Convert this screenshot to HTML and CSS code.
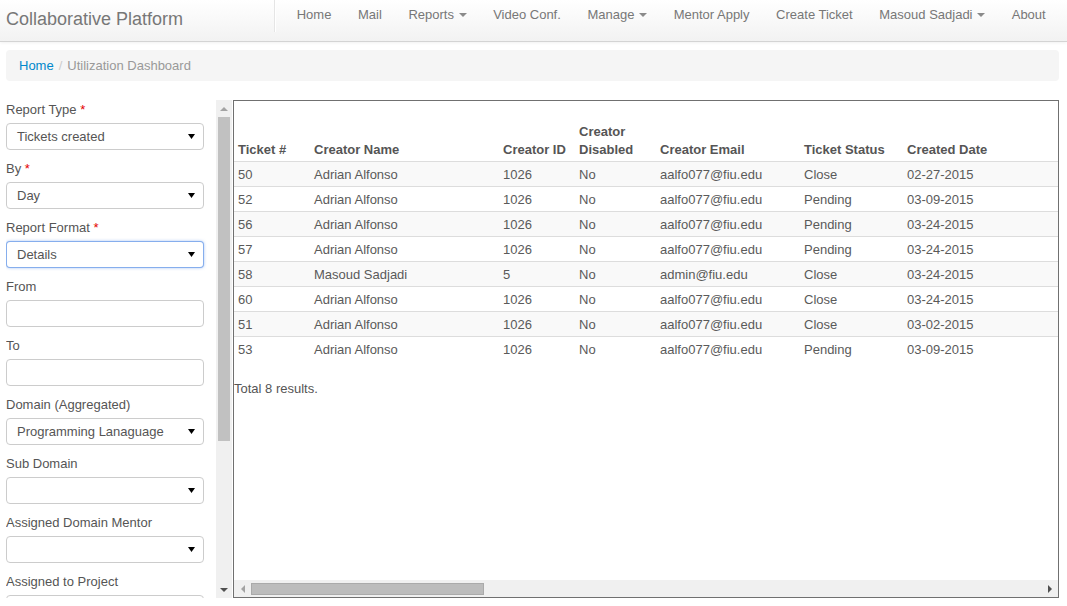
FILE: index.html
```html
<!DOCTYPE html>
<html>
<head>
<meta charset="utf-8">
<link rel="stylesheet" href="styles.css">
</head>
<body>
<header class="navbar">
  <div class="brand">Collaborative Platform</div>
  <div class="divider"></div>
  <ul class="nav">
    <li><a>Home</a></li>
    <li><a>Mail</a></li>
    <li><a>Reports <b class="caret"></b></a></li>
    <li><a>Video Conf.</a></li>
    <li><a>Manage <b class="caret"></b></a></li>
    <li><a>Mentor Apply</a></li>
    <li><a>Create Ticket</a></li>
    <li><a>Masoud Sadjadi <b class="caret"></b></a></li>
    <li><a>About</a></li>
  </ul>
</header>

<nav class="breadcrumb">
  <a class="crumb-link">Home</a><span class="sep">/</span><span class="crumb-active">Utilization Dashboard</span>
</nav>

<main class="content">
  <aside class="sidebar">
    <div class="form">
      <div class="field">
        <label>Report Type <span class="req">*</span></label>
        <div class="select"><span>Tickets created</span><svg class="arrow" width="7" height="5" viewBox="0 0 7 5"><polygon points="0,0 7,0 3.5,5" fill="#000"/></svg></div>
      </div>
      <div class="field">
        <label>By <span class="req">*</span></label>
        <div class="select"><span>Day</span><svg class="arrow" width="7" height="5" viewBox="0 0 7 5"><polygon points="0,0 7,0 3.5,5" fill="#000"/></svg></div>
      </div>
      <div class="field">
        <label>Report Format <span class="req">*</span></label>
        <div class="select focus"><span>Details</span><svg class="arrow" width="7" height="5" viewBox="0 0 7 5"><polygon points="0,0 7,0 3.5,5" fill="#000"/></svg></div>
      </div>
      <div class="field">
        <label>From</label>
        <div class="input"></div>
      </div>
      <div class="field">
        <label>To</label>
        <div class="input"></div>
      </div>
      <div class="field">
        <label>Domain (Aggregated)</label>
        <div class="select"><span>Programming Lanaguage</span><svg class="arrow" width="7" height="5" viewBox="0 0 7 5"><polygon points="0,0 7,0 3.5,5" fill="#000"/></svg></div>
      </div>
      <div class="field">
        <label>Sub Domain</label>
        <div class="select"><span></span><svg class="arrow" width="7" height="5" viewBox="0 0 7 5"><polygon points="0,0 7,0 3.5,5" fill="#000"/></svg></div>
      </div>
      <div class="field">
        <label>Assigned Domain Mentor</label>
        <div class="select"><span></span><svg class="arrow" width="7" height="5" viewBox="0 0 7 5"><polygon points="0,0 7,0 3.5,5" fill="#000"/></svg></div>
      </div>
      <div class="field">
        <label>Assigned to Project</label>
        <div class="select"><span></span><svg class="arrow" width="7" height="5" viewBox="0 0 7 5"><polygon points="0,0 7,0 3.5,5" fill="#000"/></svg></div>
      </div>
    </div>
    <div class="vscroll">
      <div class="sbtn"><i class="tri-up"></i></div>
      <div class="vtrack"><div class="vthumb"></div></div>
      <div class="sbtn"><i class="tri-down"></i></div>
    </div>
  </aside>

  <section class="panel">
    <div class="panel-body">
      <table class="grid">
        <colgroup>
          <col class="c1"><col class="c2"><col class="c3"><col class="c4"><col class="c5"><col class="c6"><col class="c7">
        </colgroup>
        <thead>
          <tr>
            <th>Ticket #</th><th>Creator Name</th><th>Creator ID</th><th>Creator<br>Disabled</th><th>Creator Email</th><th>Ticket Status</th><th>Created Date</th>
          </tr>
        </thead>
        <tbody>
          <tr class="odd"><td>50</td><td>Adrian Alfonso</td><td>1026</td><td>No</td><td>aalfo077@fiu.edu</td><td>Close</td><td>02-27-2015</td></tr>
          <tr><td>52</td><td>Adrian Alfonso</td><td>1026</td><td>No</td><td>aalfo077@fiu.edu</td><td>Pending</td><td>03-09-2015</td></tr>
          <tr class="odd"><td>56</td><td>Adrian Alfonso</td><td>1026</td><td>No</td><td>aalfo077@fiu.edu</td><td>Pending</td><td>03-24-2015</td></tr>
          <tr><td>57</td><td>Adrian Alfonso</td><td>1026</td><td>No</td><td>aalfo077@fiu.edu</td><td>Pending</td><td>03-24-2015</td></tr>
          <tr class="odd"><td>58</td><td>Masoud Sadjadi</td><td>5</td><td>No</td><td>admin@fiu.edu</td><td>Close</td><td>03-24-2015</td></tr>
          <tr><td>60</td><td>Adrian Alfonso</td><td>1026</td><td>No</td><td>aalfo077@fiu.edu</td><td>Close</td><td>03-24-2015</td></tr>
          <tr class="odd"><td>51</td><td>Adrian Alfonso</td><td>1026</td><td>No</td><td>aalfo077@fiu.edu</td><td>Close</td><td>03-02-2015</td></tr>
          <tr><td>53</td><td>Adrian Alfonso</td><td>1026</td><td>No</td><td>aalfo077@fiu.edu</td><td>Pending</td><td>03-09-2015</td></tr>
        </tbody>
      </table>
      <div class="summary">Total 8 results.</div>
    </div>
    <div class="hscroll">
      <div class="sbtn"><i class="tri-left"></i></div>
      <div class="htrack"><div class="hthumb"></div></div>
      <div class="sbtn"><i class="tri-right"></i></div>
    </div>
  </section>
</main>
</body>
</html>
```

FILE: styles.css
```css
html, body {
  margin: 0;
  padding: 0;
  background: #fff;
}
body {
  font-family: "Liberation Sans", Arial, sans-serif;
  font-size: 13px;
  color: #555;
  width: 1067px;
  height: 606px;
  overflow: hidden;
}

/* navbar */
.navbar {
  display: flex;
  height: 41px;
  background: linear-gradient(#ffffff, #f2f2f2);
  border-bottom: 1px solid #d4d4d4;
  box-shadow: 0 1px 3px rgba(0,0,0,0.06);
}
.brand {
  width: 268px;
  padding: 9px 0 0 6px;
  font-size: 18px;
  line-height: 20px;
  color: #777;
}
.divider {
  width: 1px;
  height: 32px;
  background: #e5e5e5;
  border-right: 1px solid #fff;
}
.nav {
  display: flex;
  list-style: none;
  margin: 0 8px 0 auto;
  padding: 0;
}
.nav a {
  display: block;
  padding: 5px 13.3px 3px;
  line-height: 20px;
  color: #777;
}
.caret {
  display: inline-block;
  width: 0;
  height: 0;
  margin-left: 1px;
  vertical-align: middle;
  border-top: 4px solid #8a8a8a;
  border-left: 4px solid transparent;
  border-right: 4px solid transparent;
  position: relative;
  top: -1px;
}

/* breadcrumb */
.breadcrumb {
  margin: 8px 8px 0 6px;
  height: 31px;
  box-sizing: border-box;
  line-height: 30px;
  padding: 1px 13px 0;
  background: #f5f5f5;
  border-radius: 4px;
}
.crumb-link { color: #0088cc; }
.sep { color: #ccc; padding: 0 5px; }
.crumb-active { color: #999; }

/* content */
.content {
  display: flex;
  margin-top: 19px;
  padding: 0 8px 0 6px;
  height: 498px;
}
.sidebar {
  display: flex;
  width: 227px;
  flex: 0 0 227px;
}
.form {
  width: 210px;
  overflow: hidden;
}
.field { margin-bottom: 9px; }
.field label {
  display: block;
  line-height: 18px;
  padding-top: 1px;
  margin-bottom: 4px;
  color: #555;
}
.req { color: #e40000; }
.select, .input {
  box-sizing: border-box;
  width: 198px;
  height: 27px;
  border: 1px solid #ccc;
  border-radius: 4px;
  background: #fff;
}
.select {
  display: flex;
  align-items: center;
  justify-content: space-between;
  padding: 0 8px 0 10px;
  color: #555;
}
.select.focus {
  border-color: rgba(82,140,230,0.7);
  box-shadow: 0 0 3px rgba(82,140,236,0.5);
}
.arrow { flex: 0 0 auto; }

/* scrollbars */
.vscroll {
  width: 16px;
  flex: 0 0 16px;
  margin-right: 1px;
  display: flex;
  flex-direction: column;
  background: #f0f0f0;
}
.sbtn {
  flex: 0 0 17px;
  width: 16px;
  height: 17px;
  display: flex;
  align-items: center;
  justify-content: center;
}
.vtrack { flex: 1; }
.vthumb {
  margin: 0 2px;
  height: 324px;
  background: #c1c1c1;
}
.tri-up, .tri-down, .tri-left, .tri-right {
  display: block;
  width: 0;
  height: 0;
}
.tri-up {
  border-bottom: 4px solid #a3a3a3;
  border-left: 4px solid transparent;
  border-right: 4px solid transparent;
}
.tri-down {
  border-top: 4px solid #505050;
  border-left: 4px solid transparent;
  border-right: 4px solid transparent;
}
.tri-left {
  border-right: 4px solid #a3a3a3;
  border-top: 4px solid transparent;
  border-bottom: 4px solid transparent;
}
.tri-right {
  border-left: 4px solid #505050;
  border-top: 4px solid transparent;
  border-bottom: 4px solid transparent;
}

/* panel */
.panel {
  flex: 1;
  display: flex;
  flex-direction: column;
  border: 1px solid #707070;
  min-width: 0;
}
.panel-body {
  flex: 1;
  overflow: hidden;
}
.grid {
  border-collapse: collapse;
  table-layout: fixed;
  width: 1000px;
}
.c1 { width: 76px; }
.c2 { width: 189px; }
.c3 { width: 76px; }
.c4 { width: 81px; }
.c5 { width: 144px; }
.c6 { width: 103px; }
.c7 { width: 331px; }
.grid th {
  text-align: left;
  font-weight: bold;
  color: #555;
  line-height: 18px;
  padding: 22px 4px 2px;
  vertical-align: bottom;
  white-space: nowrap;
  border-bottom: 1px solid #ddd;
}
.grid td {
  line-height: 18px;
  padding: 4px 4px 2px;
  border-top: 1px solid #ddd;
  white-space: nowrap;
  color: #5a5a5a;
}
.grid tr.odd td { background: #f9f9f9; }
.summary {
  margin-top: 19px;
  line-height: 18px;
}
.hscroll {
  height: 17px;
  flex: 0 0 17px;
  display: flex;
  background: #f0f0f0;
}
.htrack {
  flex: 1;
  display: flex;
  align-items: center;
}
.hthumb {
  width: 233px;
  height: 12px;
  background: #bcbcbc;
  box-sizing: border-box;
  border: 1px solid #aaa;
}
```
